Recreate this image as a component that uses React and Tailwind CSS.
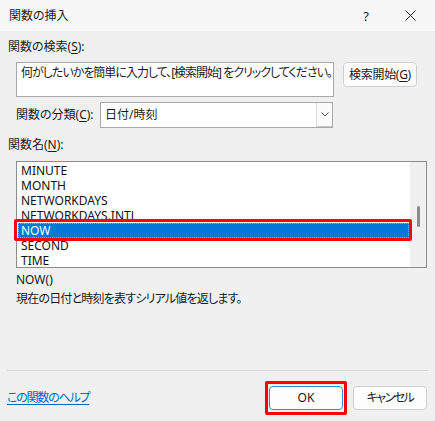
import React from 'react';

const font = {
  fontFamily: '"Noto Sans", "Noto Sans CJK JP", sans-serif',
};

const functions = ['MINUTE', 'MONTH', 'NETWORKDAYS', 'NETWORKDAYS.INTL', 'NOW', 'SECOND', 'TIME'];

function Key({ children }) {
  return <span className="underline underline-offset-2">{children}</span>;
}

export default function App() {
  return (
    <div
      className="w-[435px] h-[421px] bg-[#f0f0f0] text-[12px] leading-[14px] text-[#1a1a1a] flex flex-col overflow-hidden [font-feature-settings:'palt']"
      style={font}
    >
      {/* title bar */}
      <div className="h-[31px] bg-[#f7f7f7] flex items-center pl-[9px] shrink-0">
        <span className="flex-1">関数の挿入</span>
        <span className="w-[10px] text-center mr-[34px] text-[13px]">?</span>
        <svg width="11" height="11" viewBox="0 0 11 11" className="mr-[19px]">
          <path d="M0.5 0.5 L10.5 10.5 M10.5 0.5 L0.5 10.5" stroke="#222" strokeWidth="1" />
        </svg>
      </div>

      <div className="flex flex-col px-[8px] pt-[9px]">
        <div>
          関数の検索(<Key>S</Key>):
        </div>

        <div className="flex mt-[8px] ml-[8px] gap-[9px]">
          <div className="w-[318px] h-[35px] bg-white border border-[#a8a8a8] px-[4px] pt-[3px] whitespace-nowrap overflow-hidden tracking-[-1px]">
            何がしたいかを簡単に入力して、[検索開始] をクリックしてください。
          </div>
          <div className="w-[74px] h-[25px] bg-[#fdfdfd] border border-[#cfcfcf] rounded-[4px] flex items-center justify-center whitespace-nowrap tracking-[-0.3px]">
            検索開始(<Key>G</Key>)
          </div>
        </div>

        <div className="flex items-center mt-[5px] ml-[8px] h-[26px]">
          <span className="w-[84px]">
            関数の分類(<Key>C</Key>):
          </span>
          <div className="w-[233px] h-[26px] bg-white border border-[#a8a8a8] flex items-stretch">
            <span className="flex-1 flex items-center pl-[4px]">日付/時刻</span>
            <div className="w-[16px] border-l border-[#dcdcdc] border-b border-b-[#c8c8c8] bg-[#fbfbfb] flex items-center justify-center">
              <svg width="8" height="5" viewBox="0 0 8 5">
                <path d="M0.5 0.5 L4 4 L7.5 0.5" fill="none" stroke="#555" strokeWidth="1" />
              </svg>
            </div>
          </div>
        </div>

        <div className="mt-[10px]">
          関数名(<Key>N</Key>):
        </div>

        <div className="ml-[8px] mt-[9px] w-[411px] h-[107px] border border-[#8c8c8c] bg-white flex">
          <div className="flex-1 flex flex-col p-[1px] text-[#111] leading-[15px]">
            {functions.map((name) =>
              name === 'NOW' ? (
                <div key={name} className="relative h-[15px]">
                  <div className="h-full bg-[#0078d7] text-white px-[2px] flex items-center border border-dotted border-[#e8a040]">
                    {name}
                  </div>
                  <div className="absolute -left-[4px] -right-[3px] -top-[4px] -bottom-[3px] border-[3px] border-[#ff0000] rounded-[2px]" />
                </div>
              ) : (
                <div key={name} className="h-[15px] px-[3px] flex items-center whitespace-nowrap">
                  {name}
                </div>
              )
            )}
          </div>
          <div className="w-[16px] bg-[#f0f0f0] flex justify-center">
            <div className="w-[3px] h-[21px] mt-[44px] bg-[#8a8a8a] rounded-full" />
          </div>
        </div>

        <div className="mt-[5px] ml-[8px]">NOW()</div>
        <div className="mt-[5px] ml-[8px] tracking-[-0.8px]">現在の日付と時刻を表すシリアル値を返します。</div>
      </div>

      <div className="mt-[64px] mx-[7px] h-px bg-[#d8d8d8]" />

      <div className="flex items-center px-[7px] pt-[15px]">
        <a className="flex-1 text-[#0066cc] underline underline-offset-2 tracking-[-1.2px]">この関数のヘルプ</a>
        <div className="relative">
          <div className="w-[74px] h-[24px] bg-[#fdfdfd] border border-[#3f86cf] rounded-[4px] flex items-center justify-center">
            OK
          </div>
          <div className="absolute -left-[4px] -right-[4px] -top-[5px] -bottom-[5px] border-[3px] border-[#ff0000] rounded-[2px]" />
        </div>
        <div className="ml-[10px] mr-[1px] w-[74px] h-[24px] bg-[#fdfdfd] border border-[#cfcfcf] rounded-[4px] flex items-center justify-center tracking-[-1.5px]">
          キャンセル
        </div>
      </div>
    </div>
  );
}
